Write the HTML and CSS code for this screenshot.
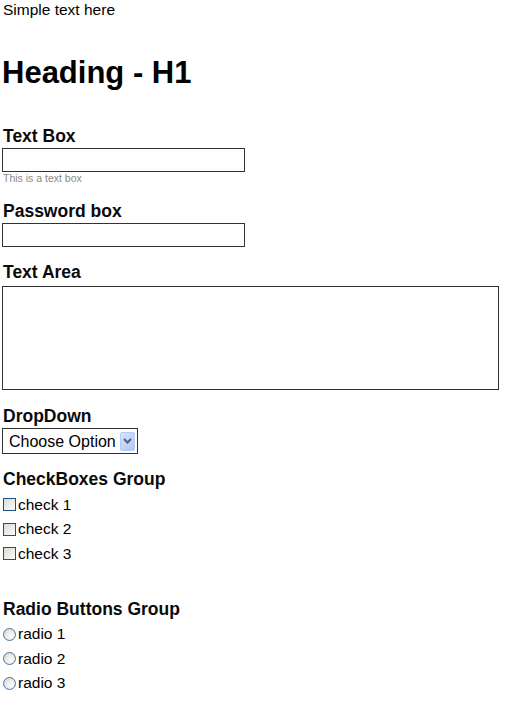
FILE: index.html
```html
<!DOCTYPE html>
<html>
<head>
<meta charset="utf-8">
<link rel="stylesheet" href="styles.css">
</head>
<body>
<p class="simple">Simple text here</p>
<h1 class="heading">Heading - H1</h1>

<div class="field first">
  <label class="label">Text Box</label>
  <input class="box" type="text">
  <div class="hint">This is a text box</div>
</div>

<div class="field pw">
  <label class="label">Password box</label>
  <input class="box" type="password">
</div>

<div class="field ta">
  <label class="label">Text Area</label>
  <textarea class="area"></textarea>
</div>

<div class="field dd">
  <label class="label">DropDown</label>
  <div class="select-wrap">
    <select class="select"><option>Choose Option</option></select>
    <span class="select-btn"><svg width="9" height="6" viewBox="0 0 9 6"><path d="M1 1 L4.5 4.5 L8 1" fill="none" stroke="#4d6185" stroke-width="2"/></svg></span>
  </div>
</div>

<div class="field cb">
  <div class="label">CheckBoxes Group</div>
  <label class="row"><input type="checkbox" class="check">check 1</label>
  <label class="row"><input type="checkbox" class="check">check 2</label>
  <label class="row"><input type="checkbox" class="check">check 3</label>
</div>

<div class="field rb">
  <div class="label">Radio Buttons Group</div>
  <label class="row"><input type="radio" name="r" class="radio">radio 1</label>
  <label class="row"><input type="radio" name="r" class="radio">radio 2</label>
  <label class="row"><input type="radio" name="r" class="radio">radio 3</label>
</div>
</body>
</html>
```

FILE: styles.css
```css
html, body {
  background: #fff;
}
body {
  margin: 0 0 0 2px;
  font-family: "Liberation Sans", Arial, sans-serif;
  color: #000;
}
.simple {
  margin: 0;
  padding: 1px 0 0 1px;
  font-size: 15.5px;
  line-height: 18px;
}
.heading {
  margin: 35px 0 0 0;
  font-size: 31px;
  line-height: 37px;
  font-weight: bold;
}
.field {
  display: flex;
  flex-direction: column;
  align-items: flex-start;
}
.label {
  display: block;
  font-size: 17.5px;
  line-height: 20px;
  font-weight: bold;
  color: #0a0a0a;
  padding-left: 1px;
}
.first { margin-top: 35px; }
.pw { margin-top: 16px; }
.ta { margin-top: 15px; }
.dd { margin-top: 16px; }
.cb { margin-top: 15px; }
.rb { margin-top: 33px; }

.box {
  display: block;
  margin: 2px 0 0 0;
  width: 243px;
  height: 24px;
  box-sizing: border-box;
  border: 1px solid #333;
  padding: 0 2px;
  font: 16px "Liberation Sans", Arial, sans-serif;
  outline: none;
}
.hint {
  font-size: 10.5px;
  line-height: 13px;
  color: #888;
  padding-left: 1px;
}
.area {
  display: block;
  margin: 4px 0 0 0;
  width: 497px;
  height: 104px;
  box-sizing: border-box;
  border: 1px solid #333;
  resize: none;
  padding: 2px;
  font: 16px "Liberation Sans", Arial, sans-serif;
}
.select-wrap {
  margin-top: 2px;
  display: inline-flex;
  align-items: center;
  width: 136px;
  height: 26px;
  box-sizing: border-box;
  border: 1px solid #333;
  background: #fff;
}
.select {
  appearance: none;
  -webkit-appearance: none;
  border: none;
  background: transparent;
  font: 16px "Liberation Sans", Arial, sans-serif;
  color: #000;
  padding: 0 0 0 6px;
  margin: 0;
  flex: 1;
  height: 24px;
  outline: none;
}
.select-btn {
  display: flex;
  align-items: center;
  justify-content: center;
  width: 15px;
  height: 19px;
  margin-right: 2px;
  box-sizing: border-box;
  border: 1px solid #b7c9f5;
  border-radius: 2px;
  background: linear-gradient(135deg, #d6e2fc, #b3c8f6);
  pointer-events: none;
}
.cb .label, .rb .label { margin-bottom: 3px; }
.row {
  display: flex;
  align-items: center;
  box-sizing: border-box;
  height: 24.5px;
  padding-top: 1px;
  font-size: 15.5px;
  line-height: 18px;
}
.check {
  appearance: none;
  -webkit-appearance: none;
  width: 13px;
  height: 13px;
  margin: 0 2px 0 1px;
  box-sizing: border-box;
  border: 1px solid #1c5180;
  background: linear-gradient(135deg, #dcdcd4, #fbfbfa);
}
.radio {
  appearance: none;
  -webkit-appearance: none;
  width: 13px;
  height: 13px;
  margin: 0 2px 0 1px;
  box-sizing: border-box;
  border: 1px solid #4f74a0;
  border-radius: 50%;
  background: radial-gradient(circle at 65% 65%, #fefefe, #d2d2cb);
}
```
